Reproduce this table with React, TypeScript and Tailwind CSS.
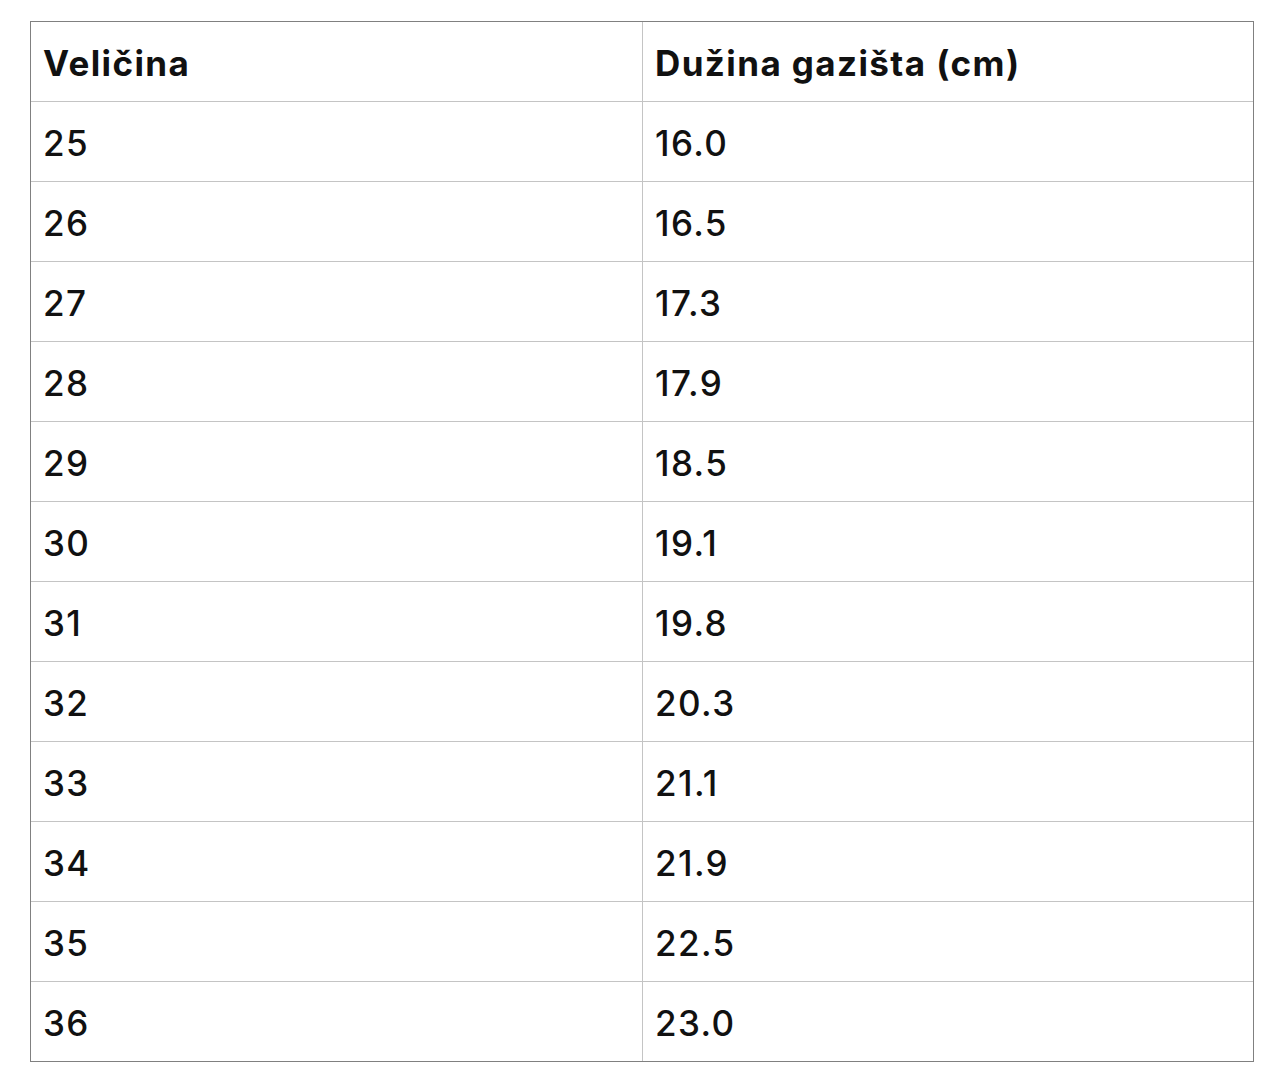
const rows: [string, string][] = [
  ["25", "16.0"],
  ["26", "16.5"],
  ["27", "17.3"],
  ["28", "17.9"],
  ["29", "18.5"],
  ["30", "19.1"],
  ["31", "19.8"],
  ["32", "20.3"],
  ["33", "21.1"],
  ["34", "21.9"],
  ["35", "22.5"],
  ["36", "23.0"],
];

export default function App() {
  return (
    <div className="min-h-[1067px] bg-white pt-[21px] pl-[30px] font-['Inter',sans-serif] text-[#111111]">
      <div className="w-[1224px] border border-[#808080]">
        <div className="grid h-[79px] grid-cols-2 text-[35px] font-bold tracking-[1.4px]">
          <div className="flex items-center pl-[12px] pt-[4px]">Veličina</div>
          <div className="flex items-center border-l border-[#c4c4c4] pl-[12px] pt-[4px]">Dužina gazišta (cm)</div>
        </div>
        {rows.map(([size, len]) => (
          <div key={size} className="grid h-[80px] grid-cols-2 border-t border-[#c4c4c4] text-[35px] font-medium tracking-[1.4px]">
            <div className="flex items-center pl-[12px] pt-[4px]">{size}</div>
            <div className="flex items-center border-l border-[#c4c4c4] pl-[12px] pt-[4px]">{len}</div>
          </div>
        ))}
      </div>
    </div>
  );
}
